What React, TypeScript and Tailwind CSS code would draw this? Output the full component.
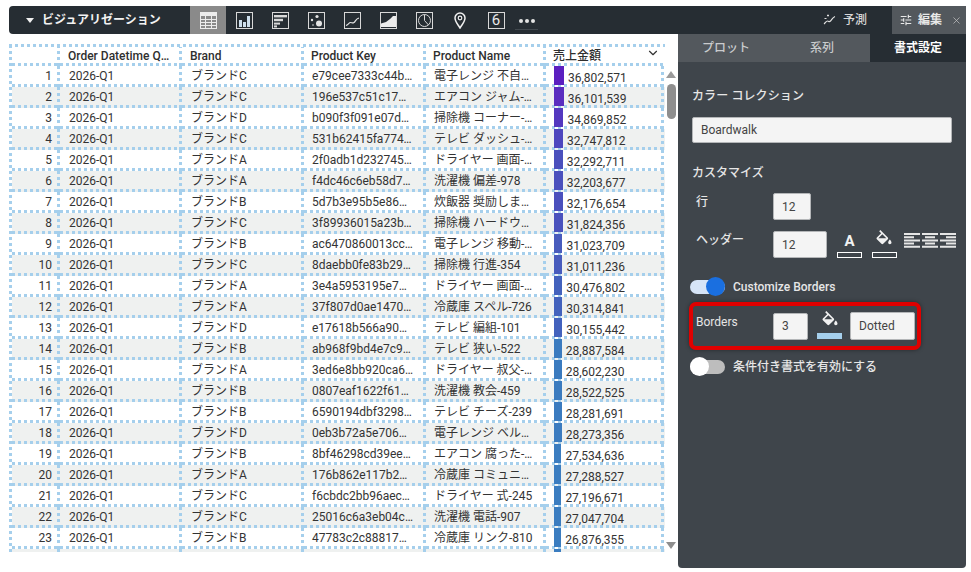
import React from "react";
import { ChevronDown, X } from "lucide-react";

const rows: [string, string, string, string][] = [
  ["ブランドC", "e79cee7333c44b…", "電子レンジ 不自…", "36,802,571"],
  ["ブランドC", "196e537c51c17…", "エアコン ジャム-…", "36,101,539"],
  ["ブランドD", "b090f3f091e07d…", "掃除機 コーナー-…", "34,869,852"],
  ["ブランドC", "531b62415fa774…", "テレビ ダッシュ-…", "32,747,812"],
  ["ブランドA", "2f0adb1d232745…", "ドライヤー 画面-…", "32,292,711"],
  ["ブランドA", "f4dc46c6eb58d7…", "洗濯機 偏差-978", "32,203,677"],
  ["ブランドB", "5d7b3e95b5e86…", "炊飯器 奨励しま…", "32,176,654"],
  ["ブランドC", "3f89936015a23b…", "掃除機 ハードウ…", "31,824,356"],
  ["ブランドB", "ac6470860013cc…", "電子レンジ 移動-…", "31,023,709"],
  ["ブランドC", "8daebb0fe83b29…", "掃除機 行進-354", "31,011,236"],
  ["ブランドA", "3e4a5953195e7…", "ドライヤー 画面-…", "30,476,802"],
  ["ブランドA", "37f807d0ae1470…", "冷蔵庫 スペル-726", "30,314,841"],
  ["ブランドD", "e17618b566a90…", "テレビ 編組-101", "30,155,442"],
  ["ブランドB", "ab968f9bd4e7c9…", "テレビ 狭い-522", "28,887,584"],
  ["ブランドA", "3ed6e8bb920ca6…", "ドライヤー 叔父-…", "28,602,230"],
  ["ブランドB", "0807eaf1622f61…", "洗濯機 教会-459", "28,522,525"],
  ["ブランドB", "6590194dbf3298…", "テレビ チーズ-239", "28,281,691"],
  ["ブランドD", "0eb3b72a5e706…", "電子レンジ ベル…", "28,273,356"],
  ["ブランドB", "8bf46298cd39ee…", "エアコン 腐った-…", "27,534,636"],
  ["ブランドA", "176b862e117b2…", "冷蔵庫 コミュニ…", "27,288,527"],
  ["ブランドC", "f6cbdc2bb96aec…", "ドライヤー 式-245", "27,196,671"],
  ["ブランドC", "25016c6a3eb04c…", "洗濯機 電話-907", "27,047,704"],
  ["ブランドB", "47783c2c88817…", "冷蔵庫 リンク-810", "26,876,355"],
];

const colors = [
  "#5b1fc0", "#5a2dbf", "#5438bf", "#4e46be", "#4b50bd", "#4b50bd", "#4b50bd", "#4a52bd",
  "#485cbd", "#485cbd", "#4362bd", "#4362bd", "#4362bd", "#3b7bbf", "#3b7bbf", "#3b7bbf",
  "#3b7bbf", "#3b7bbf", "#3b7dc0", "#3b7dc0", "#3b7dc0", "#3b7dc0", "#3b7dc0",
];

const dotted =
  "bg-no-repeat [background-image:repeating-linear-gradient(90deg,#a5cfec_0_3px,transparent_3px_6px),repeating-linear-gradient(0deg,#a5cfec_0_3px,transparent_3px_6px)] [background-size:100%_3px,3px_100%] [background-position:left_bottom,right_top]";

const fill =
  "M16.56 8.94L7.62 0 6.21 1.41l2.38 2.38-5.15 5.15c-.59.59-.59 1.54 0 2.12l5.5 5.5c.29.29.68.44 1.06.44s.77-.15 1.06-.44l5.5-5.5c.59-.58.59-1.53 0-2.12zM5.21 10L10 5.21 14.79 10H5.21zM19 11.5s-2 2.17-2 3.5c0 1.1.9 2 2 2s2-.9 2-2c0-1.33-2-3.5-2-3.5z";

function Frame({ children, stroke = "#d8d8d8" }: { children?: React.ReactNode; stroke?: string }) {
  return (
    <svg width="17" height="17" viewBox="0 0 17 17" fill="none">
      <rect x="0.5" y="0.5" width="16" height="16" stroke={stroke} />
      {children}
    </svg>
  );
}

function ToolIcon({ active, children }: { active?: boolean; children: React.ReactNode }) {
  return (
    <div className={`w-[36px] h-full flex items-center justify-center ${active ? "bg-[#8a8a8a]" : ""}`}>{children}</div>
  );
}

function Toolbar() {
  return (
    <div className="h-[28px] w-[957px] bg-[#262d33] rounded-l-[4px] flex items-center shrink-0 overflow-hidden">
      <div className="w-[181px] flex items-center pl-[17px] shrink-0">
        <svg width="8" height="5" viewBox="0 0 8 5"><path d="M0 0h8L4 5z" fill="#f0f0f0" /></svg>
        <span className="ml-[8px] text-[12px] font-bold text-[#f2f2f2] leading-none">ビジュアリゼーション</span>
      </div>
      <ToolIcon active>
        <Frame stroke="#ececec">
          <rect x="1" y="1" width="15" height="3" fill="#ececec" />
          <path d="M1 7.5h15M1 10.5h15M1 13.5h15M5.5 4v12M11.5 4v12" stroke="#ececec" />
        </Frame>
      </ToolIcon>
      <ToolIcon>
        <Frame>
          <rect x="3" y="8" width="3" height="7" fill="#cfe0ee" />
          <rect x="7" y="10" width="3" height="5" fill="#cfe0ee" />
          <rect x="11" y="4" width="3" height="11" fill="#cfe0ee" />
        </Frame>
      </ToolIcon>
      <ToolIcon>
        <Frame>
          <rect x="2" y="3" width="13" height="2.4" fill="#d8d8d8" />
          <rect x="2" y="6.8" width="9" height="2.4" fill="#d8d8d8" />
          <rect x="2" y="10.6" width="6" height="2" fill="#d8d8d8" />
          <rect x="2" y="13.4" width="3" height="2" fill="#d8d8d8" />
        </Frame>
      </ToolIcon>
      <ToolIcon>
        <Frame>
          <circle cx="11" cy="11.5" r="3" fill="#e4e4e4" />
          <circle cx="9" cy="4.5" r="1.6" fill="#e4e4e4" />
          <circle cx="4" cy="8" r="1.2" fill="#e4e4e4" />
          <circle cx="5" cy="13" r="0.8" fill="#e4e4e4" />
        </Frame>
      </ToolIcon>
      <ToolIcon>
        <Frame>
          <path d="M2 13.5c2-.5 3-3 4.500-3s2 1 3.500 0 2-4 5-4.500" stroke="#e4e4e4" strokeWidth="1.200" />
        </Frame>
      </ToolIcon>
      <ToolIcon>
        <Frame>
          <path d="M1 15V11.500L6 10l4-3 3-3h3v11z" fill="#ececec" />
        </Frame>
      </ToolIcon>
      <ToolIcon>
        <Frame>
          <circle cx="8.500" cy="8.500" r="6" stroke="#d8d8d8" />
          <path d="M8.500 2.500v6l4 4.500" stroke="#d8d8d8" />
        </Frame>
      </ToolIcon>
      <ToolIcon>
        <svg width="12" height="17" viewBox="0 0 12 17" fill="none">
          <path d="M6 16C3.500 12 1 9.500 1 6a5 5 0 0 1 10 0c0 3.500-2.500 6-5 10z" stroke="#f0f0f0" strokeWidth="1.500" />
          <circle cx="6" cy="6" r="1.800" stroke="#f0f0f0" strokeWidth="1.200" />
        </svg>
      </ToolIcon>
      <ToolIcon>
        <div className="w-[17px] h-[17px] border border-[#d8d8d8] flex items-center justify-center text-[#e8e8e8] text-[15px] leading-none">6</div>
      </ToolIcon>
      <div className="w-[23px] ml-[1px] self-start mt-[6px] h-[18px] flex items-center justify-center border-b border-[#41484e]">
        <div className="flex gap-[2px]">
          <div className="w-[4px] h-[4px] rounded-full bg-[#e4e4e4]" />
          <div className="w-[4px] h-[4px] rounded-full bg-[#e4e4e4]" />
          <div className="w-[4px] h-[4px] rounded-full bg-[#e4e4e4]" />
        </div>
      </div>
      <div className="flex-1" />
      <div className="flex items-center h-full pr-[25px] text-[#d8d8d8]">
        <svg width="13" height="12" viewBox="0 0 13 12" fill="none">
          <path d="M1 10c1.500-1 2-3 3.500-3S6 8.500 7.500 7s2-3.500 4.500-4.500" stroke="#e0e0e0" strokeWidth="1.200" />
          <path d="M4 1.500h2M5 .5v2M1.500 4.500h2" stroke="#e0e0e0" />
        </svg>
        <span className="ml-[7px] text-[12px] font-medium leading-none">予測</span>
      </div>
      <div className="w-[74px] h-full bg-[#53585d] flex items-center pl-[7px] shrink-0">
        <svg width="14" height="14" viewBox="0 0 24 24" fill="#e8e8e8">
          <path d="M3 17v2h6v-2H3zM3 5v2h10V5H3zm10 16v-2h8v-2h-8v-2h-2v6h2zM7 9v2H3v2h4v2h2V9H7zm14 4v-2H11v2h10zm-6-4h2V7h4V5h-4V3h-2v6z" />
        </svg>
        <span className="ml-[5px] text-[12px] font-bold text-[#e8e8e8] leading-none">編集</span>
        <X className="ml-[9px] text-[#c8c8c8]" size={11} strokeWidth={1.500} />
      </div>
    </div>
  );
}

function Row({ n, r, i }: { n: number; r: [string, string, string, string]; i: number }) {
  const value = Number(r[3].replace(/,/g, ""));
  const cell = `${dotted} h-full flex items-center shrink-0 overflow-hidden whitespace-nowrap`;
  return (
    <div className={`flex h-[21px] ${i % 2 === 1 ? "bg-[#eff1f0]" : ""}`}>
      <div className={`${cell} w-[48px] justify-end pr-[8px] pb-[2px]`}>{n}</div>
      <div className={`${cell} w-[122px] pl-[9px] pb-[2px]`}>2026-Q1</div>
      <div className={`${cell} w-[122px] pl-[9px] pb-[2px]`}>{r[0]}</div>
      <div className={`${cell} w-[122px] pl-[8px] pb-[2px]`}>{r[1]}</div>
      <div className={`${cell} w-[120px] pl-[8px] pb-[2px]`}>{r[2]}</div>
      <div className={`${cell} w-[118px] pl-[8px] !items-start`}>
        <div className="h-[19px] shrink-0" style={{ width: (value / 36802571) * 10, backgroundColor: colors[i] }} />
        <span className="ml-[4px] mt-[4px] leading-[16px]">{r[3]}</span>
      </div>
    </div>
  );
}

function Table() {
  return (
    <div className="w-[656px] h-[508px] overflow-hidden shrink-0 text-[12px] text-[#333] bg-no-repeat [background-image:repeating-linear-gradient(90deg,#a5cfec_0_3px,transparent_3px_6px),repeating-linear-gradient(0deg,#a5cfec_0_3px,transparent_3px_6px)] [background-size:100%_3px,3px_100%] [background-position:left_top,left_top] pl-[3px] pt-[3px]">
      <div className="flex h-[19px] font-medium text-[#2f2f2f]">
        <div className={`${dotted} h-full w-[48px] shrink-0`} />
        <div className={`${dotted} h-full w-[122px] shrink-0 flex items-center pl-[8px] pb-[2px]`}>Order Datetime Q…</div>
        <div className={`${dotted} h-full w-[122px] shrink-0 flex items-center pl-[8px] pb-[2px]`}>Brand</div>
        <div className={`${dotted} h-full w-[122px] shrink-0 flex items-center pl-[7px] pb-[2px]`}>Product Key</div>
        <div className={`${dotted} h-full w-[120px] shrink-0 flex items-center pl-[7px] pb-[2px]`}>Product Name</div>
        <div className="h-full w-[118px] shrink-0 flex items-center justify-between pl-[7px] pr-[4px] pb-[2px] [background-image:repeating-linear-gradient(90deg,#a5cfec_0_3px,transparent_3px_6px)] [background-size:100%_3px] bg-no-repeat bg-bottom">
          <span>売上金額</span>
          <ChevronDown size={14} strokeWidth={2} className="-mt-[5px] text-[#333]" />
        </div>
      </div>
      {rows.map((r, i) => (
        <Row key={i} n={i + 1} r={r} i={i} />
      ))}
      <div className="flex h-[21px] bg-[#eff1f0]">
        <div className={`${dotted} h-full w-[48px] shrink-0`} />
        <div className={`${dotted} h-full w-[122px] shrink-0`} />
        <div className={`${dotted} h-full w-[122px] shrink-0`} />
        <div className={`${dotted} h-full w-[122px] shrink-0`} />
        <div className={`${dotted} h-full w-[120px] shrink-0`} />
        <div className={`${dotted} h-full w-[118px] shrink-0 pl-[8px]`}>
          <div className="h-[19px] w-[7px] bg-[#3b7dc0]" />
        </div>
      </div>
    </div>
  );
}

function Scrollbar() {
  return (
    <div className="w-[10px] ml-[1px] h-[508px] flex flex-col items-center shrink-0">
      <svg className="mt-[27px]" width="10" height="7" viewBox="0 0 10 7"><path d="M5 0l5 7H0z" fill="#9a9a9a" /></svg>
      <div className="mt-[6px] w-[9px] h-[35px] rounded-full bg-[#8e8e8e]" />
      <div className="flex-1" />
      <svg className="mb-[3px]" width="10" height="7" viewBox="0 0 10 7"><path d="M0 0h10L5 7z" fill="#8e8e8e" /></svg>
    </div>
  );
}

function Field({ w, h = "h-[27px]", children }: { w: string; h?: string; children: React.ReactNode }) {
  return (
    <div className={`${w} ${h} bg-[#f4f4f4] border border-[#b4b6b8] rounded-[2px] flex items-center pl-[8px] text-[12px] font-normal text-[#444] shrink-0`}>
      {children}
    </div>
  );
}

function Switch({ on }: { on: boolean }) {
  return (
    <div className="relative w-[35px] h-[19px] shrink-0 flex items-center">
      <div className={`w-full h-[14px] rounded-full ${on ? "bg-[#d6e4f7]" : "bg-[#bdbdbd]"}`} />
      <div
        className={`absolute top-0 w-[19px] h-[19px] rounded-full ${on ? "right-0 bg-[#1a6fe0]" : "left-0 bg-white"}`}
      />
    </div>
  );
}

function Bucket() {
  return (
    <svg width="20" height="20" viewBox="0 0 24 24" fill="#f2f2f2">
      <path d={fill} />
    </svg>
  );
}

function Panel() {
  return (
    <div className="w-[288px] h-[534px] bg-[#3f454b] rounded-b-[4px] shrink-0 text-[12px]">
      <div className="grid grid-cols-3 h-[28px] text-center items-center bg-[#53585d] text-[#c9cbcd] font-medium">
        <div>プロット</div>
        <div>系列</div>
        <div className="h-full bg-[#262d33] text-white font-bold flex items-center justify-center">書式設定</div>
      </div>
      <div className="pl-[14px] pt-[26px] text-[#e6e6e6] font-medium">
        <div className="leading-[16px] h-[16px] tracking-[0.1px]">カラー コレクション</div>
        <div className="mt-[13px]">
          <Field w="w-[260px]" h="h-[26px]">Boardwalk</Field>
        </div>
        <div className="mt-[22px] leading-[16px] h-[16px]">カスタマイズ</div>
        <div className="flex mt-[12px] h-[27px]">
          <div className="w-[81px] shrink-0 pl-[4px] mt-[1px] leading-[16px]">行</div>
          <Field w="w-[38px]">12</Field>
        </div>
        <div className="flex mt-[11px] h-[27px]">
          <div className="w-[81px] shrink-0 pl-[4px] pt-[1px] leading-[16px]">ヘッダー</div>
          <Field w="w-[54px]">12</Field>
          <div className="w-[25px] ml-[10px] flex flex-col items-center shrink-0">
            <span className="text-[15px] font-bold leading-[20px] h-[23px] text-[#f2f2f2]">A</span>
            <div className="w-[25px] h-[6px] border border-white" />
          </div>
          <div className="w-[25px] ml-[10px] flex flex-col items-center shrink-0">
            <div className="h-[23px] -mt-[1px] -ml-[2px]"><Bucket /></div>
            <div className="w-[25px] h-[6px] border border-white" />
          </div>
          <svg className="ml-[7px] mt-[2px] shrink-0" width="52" height="15" viewBox="0 0 52 15" fill="#e6e6e6">
            <path d="M0 0h16v2H0zM0 3.200h10v2H0zM0 6.400h16v2H0zM0 9.600h10v2H0zM0 12.800h16v2H0z" />
            <path d="M18 0h16v2H18zM21 3.200h10v2H21zM18 6.400h16v2H18zM21 9.600h10v2H21zM18 12.800h16v2H18z" />
            <path d="M36 0h16v2H36zM42 3.200h10v2H42zM36 6.400h16v2H36zM42 9.600h10v2H42zM36 12.800h16v2H36z" />
          </svg>
        </div>
        <div className="flex items-center mt-[19px] -ml-[2px]">
          <Switch on />
          <span className="ml-[8px]">Customize Borders</span>
        </div>
        <div className="-ml-[3px] mt-[6px] w-[232px] h-[48px] border-[4px] border-[#e00000] rounded-[7px] flex items-center pl-[3px] shadow-[0_0_4px_rgba(0,0,0,0.4)]">
          <div className="w-[77px] -mt-[8px] leading-[16px] font-normal">Borders</div>
          <Field w="w-[35px]">3</Field>
          <div className="w-[25px] ml-[9px] h-[28px] flex flex-col items-center shrink-0">
            <div className="h-[22px] -mt-[1px]"><Bucket /></div>
            <div className="w-[25px] h-[6px] bg-[#a5cfec]" />
          </div>
          <div className="ml-[8px]">
            <Field w="w-[65px]" h="h-[28px]">Dotted</Field>
          </div>
        </div>
        <div className="flex items-center mt-[7px] -ml-[2px]">
          <Switch on={false} />
          <span className="ml-[8px]">条件付き書式を有効にする</span>
        </div>
      </div>
    </div>
  );
}

export default function App() {
  return (
    <div className="w-[971px] h-[572px] bg-white overflow-hidden pt-[6px] pl-[9px] flex flex-col [font-family:Roboto,'Noto_Sans_CJK_JP',sans-serif]">
      <Toolbar />
      <div className="flex">
        <div className="w-[669px] pt-[10px] flex shrink-0">
          <Table />
          <Scrollbar />
        </div>
        <Panel />
      </div>
    </div>
  );
}
